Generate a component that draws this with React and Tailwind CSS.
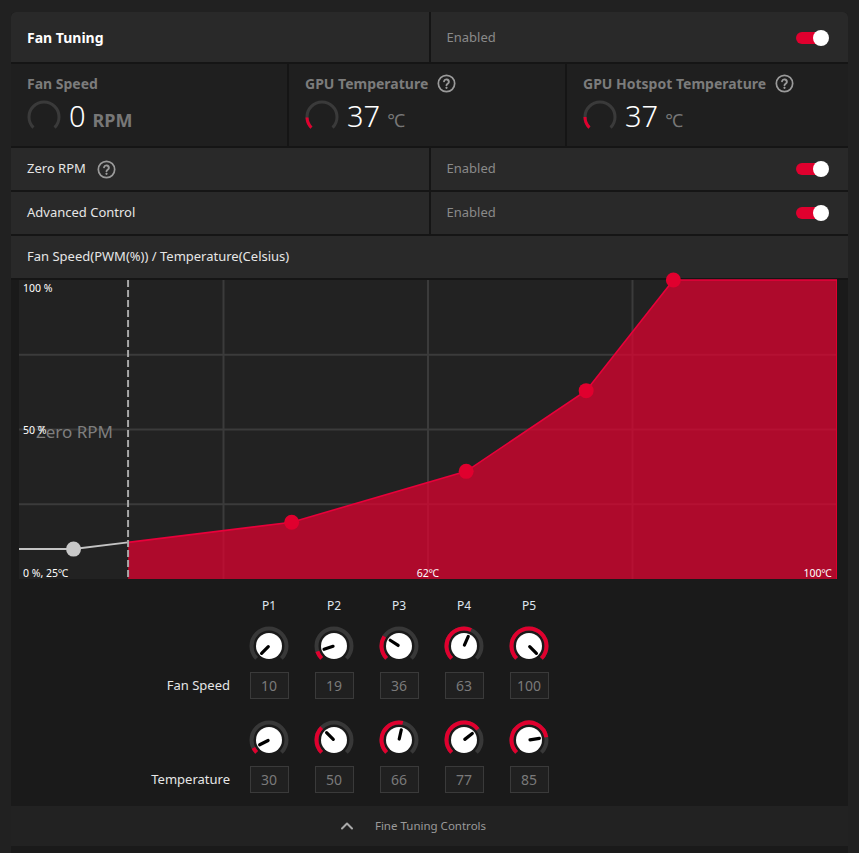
import { ChevronUp } from 'lucide-react'

const FONT = { fontFamily: '"Noto Sans", "Open Sans", sans-serif' }

const temps = [30, 50, 66, 77, 85]
const speeds = [10, 19, 36, 63, 100]

// angle in degrees, clockwise from 12 o'clock
function pt(cx, cy, r, a) {
    const rad = (a * Math.PI) / 180
    return [cx + r * Math.sin(rad), cy - r * Math.cos(rad)]
}

function arc(cx, cy, r, a0, a1) {
    const [x0, y0] = pt(cx, cy, r, a0)
    const [x1, y1] = pt(cx, cy, r, a1)
    const large = a1 - a0 > 180 ? 1 : 0
    return `M ${x0} ${y0} A ${r} ${r} 0 ${large} 1 ${x1} ${y1}`
}

function HelpIcon() {
    return (
        <svg width="19" height="19" viewBox="0 0 20 20" fill="none" stroke="#9a9a9a" strokeWidth="1.8" strokeLinecap="round">
            <circle cx="10" cy="10" r="8.6" />
            <path d="M7.4 7.6a2.6 2.6 0 0 1 5.1.7c0 1.7-2.5 2.2-2.5 3.6" strokeWidth="2" />
            <circle cx="10" cy="14.6" r="0.6" fill="#9a9a9a" strokeWidth="1.2" />
        </svg>
    )
}

function Toggle() {
    return (
        <div className="relative w-[33px] h-[16px] flex items-center">
            <div className="w-[30px] h-[12px] rounded-full bg-[#e0002e]" />
            <div className="absolute right-0 top-0 w-[16px] h-[16px] rounded-full bg-white" />
        </div>
    )
}

function Gauge({ to }) {
    return (
        <svg width="34" height="34" viewBox="0 0 34 34">
            <path d={arc(17, 17, 15, -135, 135)} fill="none" stroke="#3a3a3a" strokeWidth="3" />
            {to != null && <path d={arc(17, 17, 15, -135, to)} fill="none" stroke="#e0002e" strokeWidth="3" />}
        </svg>
    )
}

function Knob({ frac }) {
    const a = -135 + frac * 270
    const [x0, y0] = pt(20, 20, 1, a)
    const [x1, y1] = pt(20, 20, 10.5, a)
    return (
        <svg width="40" height="40" viewBox="0 0 40 40">
            <path d={arc(20, 20, 17.5, -135, 135)} fill="none" stroke="#383838" strokeWidth="4" />
            {frac > 0.005 && <path d={arc(20, 20, 17.5, -135, a)} fill="none" stroke="#e0002e" strokeWidth="4" />}
            <circle cx="20" cy="20" r="13" fill="#ffffff" />
            <line x1={x0} y1={y0} x2={x1} y2={y1} stroke="#000" strokeWidth="3.2" strokeLinecap="round" />
        </svg>
    )
}

function Stat({ label, value, unit, help, to, unitBold }) {
    return (
        <div className="bg-[#1f1f1f] flex flex-col pt-[10px] px-4">
            <div className="flex items-center gap-[9px] h-[18px]">
                <span className="text-[14px] font-bold text-[#7c7c7c]">{label}</span>
                {help && <HelpIcon />}
            </div>
            <div className="flex items-center gap-[8px] mt-[7px]">
                <Gauge to={to} />
                <div className="flex items-baseline gap-[7px]">
                    <span className="text-[29px] leading-[34px] text-white font-light">{value}</span>
                    <span className={`text-[18px] text-[#777] ${unitBold ? 'font-bold' : ''}`}>{unit}</span>
                </div>
            </div>
        </div>
    )
}

function Chart() {
    const W = 818
    const H = 299
    const X = (t) => ((t - 25) / 75) * W
    const Y = (p) => H - (p / 100) * H
    const P = temps.map((t, i) => [X(t), Y(speeds[i])])
    const zx = X(35)
    const k = (zx - P[0][0]) / (P[1][0] - P[0][0])
    const zy = P[0][1] + k * (P[1][1] - P[0][1])
    const red = [[zx, zy], ...P.slice(1), [W, 0]]
    const redLine = red.map((p, i) => `${i ? 'L' : 'M'} ${p[0]} ${p[1]}`).join(' ')
    const fill = `${redLine} L ${W} ${H} L ${zx} ${H} Z`
    const vx = [W / 4, W / 2, (W * 3) / 4]
    const hy = [H / 4, H / 2, (H * 3) / 4]
    return (
        <div className="w-[818px] h-[299px] bg-[#222222]">
            <svg width={W} height={H} viewBox={`0 0 ${W} ${H}`} className="overflow-visible block" style={FONT}>
                {vx.map((x) => (
                    <line key={x} x1={x} y1="0" x2={x} y2={H} stroke="#3b3b3b" strokeWidth="2" />
                ))}
                {hy.map((y) => (
                    <line key={y} x1="0" y1={y} x2={W} y2={y} stroke="#3b3b3b" strokeWidth="2" />
                ))}
                <path d={fill} fill="#e90030" fillOpacity="0.7" />
                <line x1={W - 0.5} y1="0" x2={W - 0.5} y2={H} stroke="#e0002e" strokeWidth="1" />
                <path d={redLine} fill="none" stroke="#e8003a" strokeWidth="1.6" />
                <path d={`M 0 ${P[0][1]} L ${P[0][0]} ${P[0][1]} L ${zx} ${zy}`} fill="none" stroke="#c4c4c4" strokeWidth="2" />
                <line x1={zx} y1="0" x2={zx} y2={H} stroke="#a8a8a8" strokeWidth="2" strokeDasharray="7 3" />
                <circle cx={P[0][0]} cy={P[0][1]} r="7.5" fill="#c8c8c8" />
                {P.slice(1).map((p, i) => (
                    <circle key={i} cx={p[0]} cy={p[1]} r="7.5" fill="#e0002e" />
                ))}
                <text x="17" y="158" fontSize="17" fill="#7e7e7e">Zero RPM</text>
                <text x="4" y="12" fontSize="10.5" fill="#ffffff">100 %</text>
                <text x="4" y="154" fontSize="10.5" fill="#ffffff">50 %</text>
                <text x="4" y="297" fontSize="10.5" fill="#ffffff">0 %, 25℃</text>
                <text x={W / 2} y="297" fontSize="10.5" fill="#ffffff" textAnchor="middle">62℃</text>
                <text x={W - 5} y="297" fontSize="10.5" fill="#ffffff" textAnchor="end">100℃</text>
            </svg>
        </div>
    )
}

function KnobRow({ label, values, fracs }) {
    return (
        <div className="flex flex-col">
            <div className="flex pl-[238px] gap-[25px]">
                {fracs.map((f, i) => (
                    <Knob key={i} frac={f} />
                ))}
            </div>
            <div className="flex items-center mt-[6px]">
                <div className="w-[238px] pr-[19px] text-right text-[13px] text-[#e6e6e6]">{label}</div>
                <div className="flex gap-[25px]">
                    {values.map((v, i) => (
                        <div key={i} className="w-[40px] flex justify-center">
                            <div className="w-[39px] h-[27px] border border-[#3a3a3a] bg-[#202020] flex items-center justify-center text-[14px] text-[#7a7a7a]">
                                {v}
                            </div>
                        </div>
                    ))}
                </div>
            </div>
        </div>
    )
}

export default function App() {
    return (
        <div className="min-h-screen bg-[#212121] pt-[12px] px-[11px]" style={FONT}>
            <div className="rounded-t-[5px] overflow-hidden bg-[#151515] flex flex-col gap-[2px]">
                {/* header */}
                <div className="grid grid-cols-2 gap-[2px] h-[50px]">
                    <div className="bg-[#292929] flex items-center px-4">
                        <span className="text-[14px] font-bold text-white">Fan Tuning</span>
                    </div>
                    <div className="bg-[#292929] flex items-center justify-between pl-4 pr-[19px] pt-[1px]">
                        <span className="text-[13px] text-[#8a8a8a]">Enabled</span>
                        <Toggle />
                    </div>
                </div>

                {/* stats */}
                <div className="grid grid-cols-[276px_276px_1fr] gap-[2px] h-[82px]">
                    <Stat label="Fan Speed" value="0" unit="RPM" unitBold />
                    <Stat label="GPU Temperature" value="37" unit="℃" help to={-92} />
                    <Stat label="GPU Hotspot Temperature" value="37" unit="℃" help to={-90} />
                </div>

                {/* zero rpm */}
                <div className="grid grid-cols-2 gap-[2px] h-[42px]">
                    <div className="bg-[#292929] flex items-center gap-[11px] px-4">
                        <span className="text-[13px] text-[#e6e6e6]">Zero RPM</span>
                        <HelpIcon />
                    </div>
                    <div className="bg-[#292929] flex items-center justify-between pl-4 pr-[19px]">
                        <span className="text-[13px] text-[#8a8a8a]">Enabled</span>
                        <Toggle />
                    </div>
                </div>

                {/* advanced */}
                <div className="grid grid-cols-2 gap-[2px] h-[42px]">
                    <div className="bg-[#292929] flex items-center px-4">
                        <span className="text-[13px] text-[#e6e6e6]">Advanced Control</span>
                    </div>
                    <div className="bg-[#292929] flex items-center justify-between pl-4 pr-[19px]">
                        <span className="text-[13px] text-[#8a8a8a]">Enabled</span>
                        <Toggle />
                    </div>
                </div>

                {/* chart */}
                <div className="bg-[#292929] h-[42px] flex items-center px-4">
                    <span className="text-[13px] text-[#e6e6e6]">Fan Speed(PWM(%)) / Temperature(Celsius)</span>
                </div>
                <div className="bg-[#1a1a1a] flex flex-col">
                    <div className="pl-[8px]">
                        <Chart />
                    </div>

                    {/* knobs */}
                    <div className="flex pl-[238px] gap-[25px] pt-[19px]">
                        {['P1', 'P2', 'P3', 'P4', 'P5'].map((p) => (
                            <div key={p} className="w-[40px] text-center text-[12px] leading-[16px] text-[#dfe6f0]">
                                {p}
                            </div>
                        ))}
                    </div>
                    <div className="mt-[12px]">
                        <KnobRow label="Fan Speed" values={speeds} fracs={speeds.map((v) => (v - 10) / 90)} />
                    </div>
                    <div className="mt-[21px]">
                        <KnobRow label="Temperature" values={temps} fracs={temps.map((v) => (v - 25) / 75)} />
                    </div>

                    <div className="mt-[13px] h-[40px] bg-[#222222] flex items-center justify-center gap-[18px] pr-[36px]">
                        <ChevronUp size={20} color="#aaaaaa" strokeWidth={2.4} />
                        <span className="text-[11.5px] text-[#9a9a9a]">Fine Tuning Controls</span>
                    </div>
                    <div className="h-[8px]" />
                </div>
            </div>
        </div>
    )
}
